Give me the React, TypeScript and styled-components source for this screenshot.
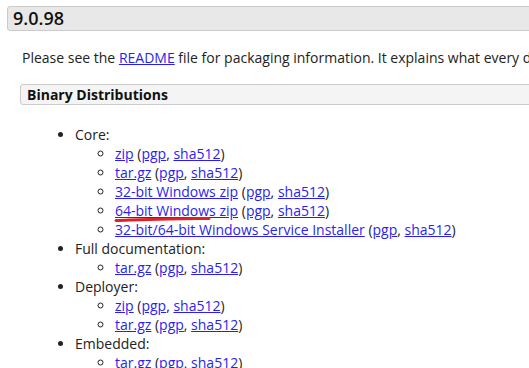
import React from 'react';
import styled, { createGlobalStyle } from 'styled-components';

const GlobalStyle = createGlobalStyle`
  html, body {
    margin: 0;
    padding: 0;
    background: #fff;
    overflow: hidden;
  }
  body {
    font-family: 'Open Sans', 'Noto Sans', sans-serif;
    font-size: 14px;
    color: #222;
  }
`;

const Page = styled.div`
  width: 760px;
  padding: 6px 0 0 7px;
`;

const VersionTitle = styled.h3`
  margin: 0;
  height: 23px;
  line-height: 23px;
  padding: 0 5px;
  font-size: 18px;
  font-weight: 600;
  background: #e8e8e8;
  border: 1px solid #cbcbcb;
  border-radius: 3px;
  color: #111;
`;

const Body = styled.div`
  padding: 0 0 0 13px;
`;

const Intro = styled.p`
  margin: 17px 0 0 2px;
  line-height: 19px;
  white-space: nowrap;
`;

const SectionTitle = styled.h4`
  margin: 17px 0 0;
  height: 19px;
  line-height: 19px;
  padding: 0 6px;
  font-size: 14px;
  font-weight: 700;
  background: #f4f4f4;
  border: 1px solid #cbcbcb;
  border-radius: 3px;
  color: #111;
`;

const Link = styled.a`
  color: #2a1ef0;
  text-decoration: underline;
`;

const Groups = styled.ul`
  position: relative;
  list-style: disc;
  margin: 20px 0 0;
  padding-left: 55px;
  line-height: 19px;
`;

const Files = styled.ul`
  list-style: circle;
  margin: 0;
  padding-left: 40px;
`;

const Scribble = styled.svg`
  position: absolute;
  left: 94px;
  top: 90px;
  width: 98px;
  height: 8px;
  pointer-events: none;
`;

type Dl = { label: string };

const groups: { name: string; files: Dl[] }[] = [
  {
    name: 'Core:',
    files: [
      { label: 'zip' },
      { label: 'tar.gz' },
      { label: '32-bit Windows zip' },
      { label: '64-bit Windows zip' },
      { label: '32-bit/64-bit Windows Service Installer' },
    ],
  },
  { name: 'Full documentation:', files: [{ label: 'tar.gz' }] },
  { name: 'Deployer:', files: [{ label: 'zip' }, { label: 'tar.gz' }] },
  { name: 'Embedded:', files: [{ label: 'tar.gz' }, { label: 'zip' }] },
];

function FileRow({ file }: { file: Dl }) {
  return (
    <li>
      <Link href="#">{file.label}</Link> (<Link href="#">pgp</Link>,{' '}
      <Link href="#">sha512</Link>)
    </li>
  );
}

export default function App() {
  return (
    <>
      <GlobalStyle />
      <Page>
        <VersionTitle>9.0.98</VersionTitle>
        <Body>
          <Intro>
            Please see the <Link href="#">README</Link> file for packaging
            information. It explains what every distribution contains.
          </Intro>
          <SectionTitle>Binary Distributions</SectionTitle>
          <Groups>
            {groups.map((g) => (
              <li key={g.name}>
                {g.name}
                <Files>
                  {g.files.map((f, i) => (
                    <FileRow key={i} file={f} />
                  ))}
                </Files>
              </li>
            ))}
            <Scribble viewBox="0 0 98 8">
              <path
                d="M2 5.5 C 30 4.5, 60 3, 95 3.5"
                stroke="#e0202a"
                strokeWidth="3"
                strokeLinecap="round"
                fill="none"
              />
            </Scribble>
          </Groups>
        </Body>
      </Page>
    </>
  );
}
